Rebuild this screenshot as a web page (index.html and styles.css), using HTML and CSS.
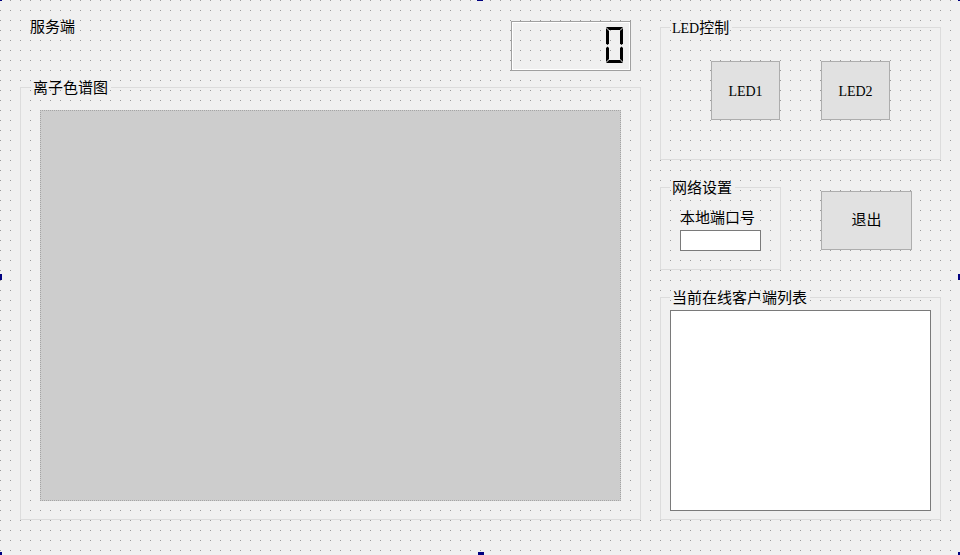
FILE: index.html
```html
<!DOCTYPE html>
<html lang="zh-CN">
<head>
<meta charset="utf-8">
<title>服务端</title>
<link rel="stylesheet" href="styles.css">
</head>
<body>
<div class="form">
  <div class="col-left">
    <div class="top-row">
      <span class="plain-label">服务端</span>
      <div class="lcd">
        <svg class="lcd-digit" width="118" height="48" viewBox="0 0 118 48">
          <g fill="#000">
            <path d="M94,5 L111,5 L108,8 L97,8 Z"/>
            <path d="M94,6 L97,9 L97,21.5 L95.5,23 L94,21.5 Z"/>
            <path d="M95.5,24.5 L97,26 L97,37 L94,40 L94,26 Z"/>
            <path d="M94,41 L97,38 L108,38 L111,41 Z"/>
            <path d="M111,6 L111,21.5 L109.5,23 L108,21.5 L108,9 Z"/>
            <path d="M109.5,24.5 L111,26 L111,40 L108,37 L108,26 Z"/>
          </g>
        </svg>
      </div>
    </div>
    <fieldset class="group group-chart">
      <legend>离子色谱图</legend>
      <div class="graphics"></div>
    </fieldset>
  </div>
  <div class="col-right">
    <fieldset class="group group-led">
      <legend><span class="latin">LED</span>控制</legend>
      <div class="led-row">
        <button class="btn led" type="button">LED1</button>
        <button class="btn led" type="button">LED2</button>
      </div>
    </fieldset>
    <div class="net-row">
      <fieldset class="group group-net">
        <legend>网络设置</legend>
        <label class="port-label" for="port">本地端口号</label>
        <input class="port-input" id="port" type="text">
      </fieldset>
      <button class="btn quit" type="button">退出</button>
    </div>
    <fieldset class="group group-clients">
      <legend>当前在线客户端列表</legend>
      <div class="client-list"></div>
    </fieldset>
  </div>
</div>
<div class="handle h-tl"></div>
<div class="handle h-tm"></div>
<div class="handle h-tr"></div>
<div class="handle h-ml"></div>
<div class="handle h-mr"></div>
<div class="handle h-bl"></div>
<div class="handle h-bm"></div>
<div class="handle h-br"></div>
</body>
</html>
```

FILE: styles.css
```css
html, body {
  margin: 0;
  padding: 0;
}

body {
  position: relative;
  width: 960px;
  height: 555px;
  overflow: hidden;
  font-family: "Liberation Serif", "Noto Sans CJK SC", serif;
  font-size: 15px;
  color: #000;
  background:
    linear-gradient(to right, transparent 1px, #f0f0f0 1px) 0 0 / 10px 10px,
    linear-gradient(to bottom, transparent 1px, #f0f0f0 1px) 0 0 / 10px 10px,
    #9a9a9a;
}

.form {
  display: flex;
  height: 555px;
  padding-left: 20px;
  box-sizing: border-box;
}

/* left column */
.col-left {
  width: 621px;
  display: flex;
  flex-direction: column;
}

.top-row {
  height: 79px;
  display: flex;
  justify-content: space-between;
  align-items: flex-start;
  padding: 0 10px;
  box-sizing: border-box;
}

.plain-label {
  margin-top: 20px;
  line-height: 15px;
}

.lcd {
  margin-top: 21px;
  width: 120px;
  height: 50px;
  box-sizing: border-box;
  border: 1px solid #a0a0a0;
  box-shadow: inset 1px 1px 0 #fff, inset -1px -1px 0 #fff;
}

.lcd-digit {
  display: block;
}

/* group boxes */
.group {
  margin: 0;
  padding: 0;
  min-width: 0;
  border: 1px solid #dcdcdc;
  box-sizing: border-box;
}

.group legend {
  margin-left: 9px;
  padding: 2px 3px 0 2px;
  line-height: 15px;
}

.latin {
  font-family: "Liberation Serif", serif;
  font-size: 14px;
}

.group-chart {
  height: 441px;
}

.group-chart legend {
  margin-left: 10px;
}

.graphics {
  margin: 14px 0 0 19px;
  width: 581px;
  height: 391px;
  box-sizing: border-box;
  background: #cdcdcd;
  border: 1px dotted #a4a4a4;
}

/* right column */
.col-right {
  margin-left: 19px;
  width: 281px;
  display: flex;
  flex-direction: column;
}

.group-led {
  margin-top: 19px;
  height: 141px;
}

.led-row {
  display: flex;
  gap: 41px;
  margin: 25px 0 0 50px;
}

.btn {
  margin: 0;
  padding: 0;
  box-sizing: border-box;
  background: #e1e1e1;
  border: 1px solid #adadad;
  font-family: "Liberation Serif", "Noto Sans CJK SC", serif;
  font-size: 15px;
  color: #000;
  line-height: 15px;
}

.led {
  width: 69px;
  height: 59px;
  font-size: 14px;
  padding-top: 2px;
}

.net-row {
  display: flex;
  align-items: flex-start;
  margin-top: 19px;
}

.group-net {
  width: 121px;
  height: 91px;
  flex: none;
}

.port-label {
  display: block;
  margin: 15px 0 0 19px;
  line-height: 15px;
}

.port-input {
  display: block;
  margin: 4px 0 0 19px;
  padding: 0;
  width: 81px;
  height: 21px;
  box-sizing: border-box;
  border: 1px solid #7a7a7a;
  background: #fff;
}

.quit {
  width: 91px;
  height: 59px;
  margin: 12px 0 0 40px;
}

.group-clients {
  margin-top: 19px;
  height: 231px;
}

.client-list {
  margin: 4px 0 0 9px;
  width: 261px;
  height: 201px;
  box-sizing: border-box;
  background: #fff;
  border: 1px solid #7a7a7a;
}

/* designer selection handles */
.handle {
  position: absolute;
  width: 6px;
  height: 6px;
  background: #000080;
}

.h-tl { left: -4px; top: -5px; }
.h-tm { left: 477px; top: -5px; }
.h-tr { left: 958px; top: -5px; }
.h-ml { left: -4px; top: 274px; }
.h-mr { left: 958px; top: 274px; }
.h-bl { left: -4px; top: 552px; }
.h-bm { left: 478px; top: 552px; }
.h-br { left: 958px; top: 552px; }
```
